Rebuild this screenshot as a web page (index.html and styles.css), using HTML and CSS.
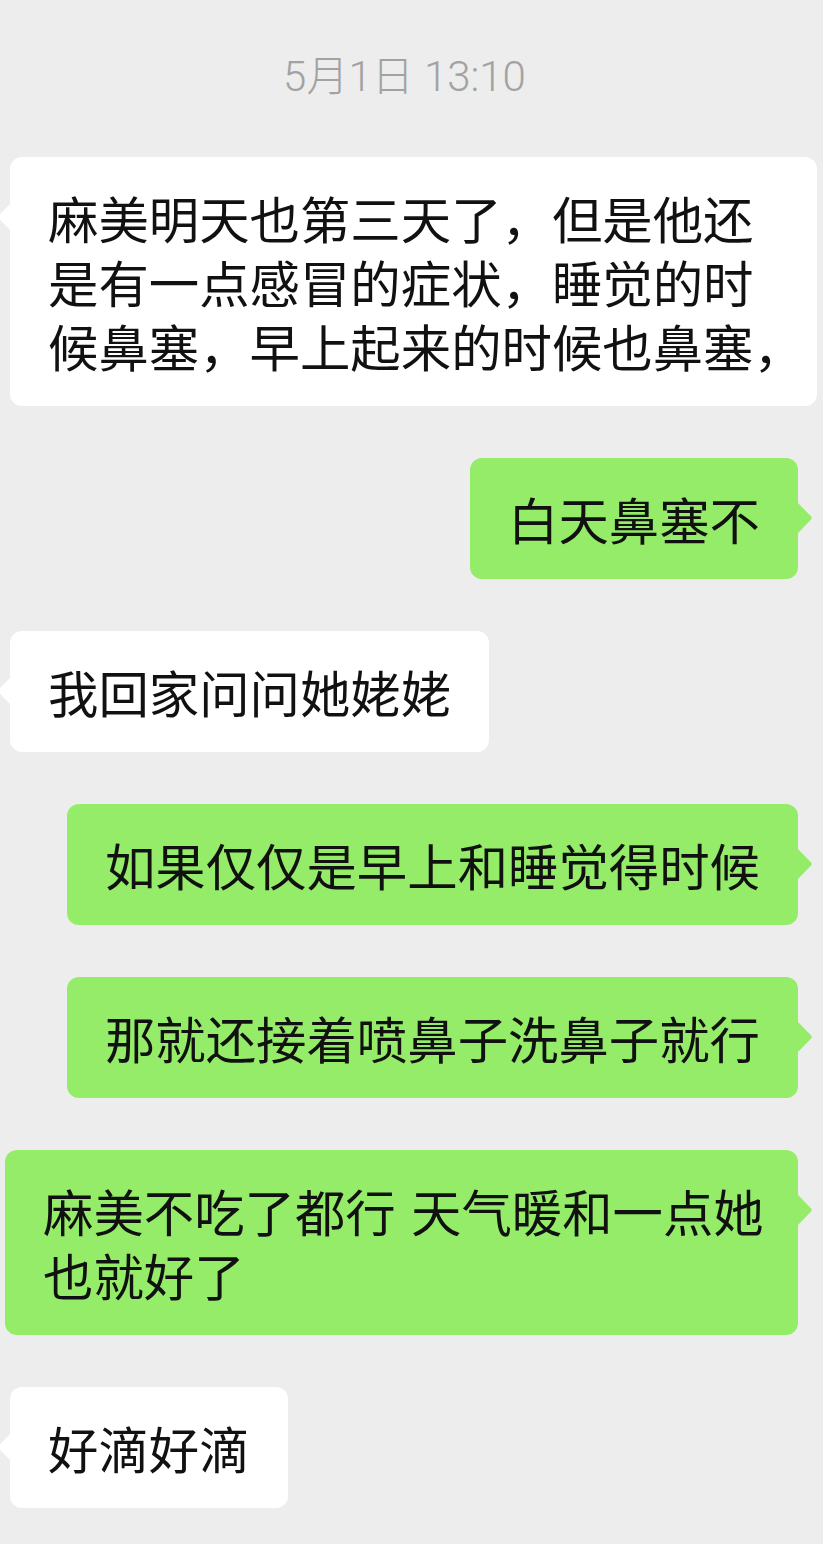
FILE: index.html
```html
<!DOCTYPE html>
<html lang="zh-CN">
<head>
    <meta charset="UTF-8">
    <meta name="viewport" content="width=device-width, initial-scale=1.0">
    <title>聊天</title>
    <link rel="stylesheet" href="styles.css">
</head>
<body>

    <div class="chat">
        <div class="time">5月1日 13:10</div>

        <div class="row left">
            <div class="bubble white">麻美明天也第三天了，但是他还<br>是有一点感冒的症状，睡觉的时<br>候鼻塞，早上起来的时候也鼻塞，</div>
        </div>

        <div class="row right">
            <div class="bubble green">白天鼻塞不</div>
        </div>

        <div class="row left">
            <div class="bubble white">我回家问问她姥姥</div>
        </div>

        <div class="row right">
            <div class="bubble green">如果仅仅是早上和睡觉得时候</div>
        </div>

        <div class="row right">
            <div class="bubble green">那就还接着喷鼻子洗鼻子就行</div>
        </div>

        <div class="row right">
            <div class="bubble green">麻美不吃了都行 天气暖和一点她<br>也就好了</div>
        </div>

        <div class="row left">
            <div class="bubble white">好滴好滴</div>
        </div>
    </div>

</body>
</html>
```

FILE: styles.css
```css
body {
    margin: 0;
    background-color: #ededed;
    font-family: "Noto Sans CJK SC", "Noto Sans", sans-serif;
    color: #111111;
}
.chat {
    display: flex;
    flex-direction: column;
    gap: 52px;
    padding: 48px 0 40px;
}
.time {
    text-align: center;
    font-family: "Roboto", "Noto Sans CJK SC", sans-serif;
    font-size: 42px;
    font-weight: 300;
    line-height: 58px;
    color: #a2a2a2;
    padding-right: 14px;
    margin-bottom: -1px;
}
.row {
    display: flex;
}
.row.left {
    justify-content: flex-start;
    padding-left: 10px;
}
.row.right {
    justify-content: flex-end;
    padding-right: 25px;
}
.bubble {
    position: relative;
    font-size: 50.4px;
    line-height: 64px;
    padding: 29px 38px 28px;
    border-radius: 12px;
    white-space: nowrap;
    word-spacing: 4px;
}
.bubble.white {
    background-color: #ffffff;
    max-width: 731px;
}
.bubble.green {
    background-color: #95ec69;
    max-width: 717px;
}
/* little tails next to the first line */
.bubble::before {
    content: "";
    position: absolute;
    top: 45px;
    width: 14px;
    height: 30px;
}
.bubble.white::before {
    left: -12px;
    background-color: #ffffff;
    clip-path: polygon(100% 0, 8% 44%, 0 50%, 8% 56%, 100% 100%);
}
.bubble.green::before {
    right: -14px;
    background-color: #95ec69;
    clip-path: polygon(0 0, 92% 44%, 100% 50%, 92% 56%, 0 100%);
}
```
